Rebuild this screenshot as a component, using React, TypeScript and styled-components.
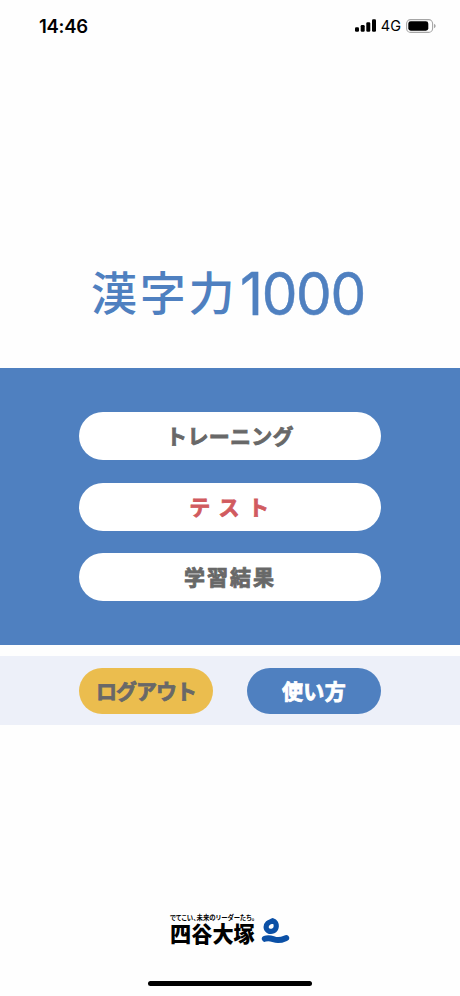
import styled, { createGlobalStyle } from "styled-components";

const GlobalStyle = createGlobalStyle`
  * {
    box-sizing: border-box;
  }

  body {
    margin: 0;
    background: #fefefe;
    font-family: "Noto Sans CJK JP", sans-serif;
  }
`;

const Screen = styled.div`
  display: flex;
  flex-direction: column;
  width: 460px;
  height: 996px;
  overflow: hidden;
`;

const StatusBar = styled.header`
  display: flex;
  justify-content: space-between;
  align-items: center;
  height: 52px;
  padding: 0 24px 0 39px;
  font-family: Inter, sans-serif;
  color: #000;
`;

const Clock = styled.span`
  font-size: 18.5px;
  font-weight: 600;
  line-height: 20px;
  letter-spacing: -0.3px;
`;

const StatusIcons = styled.div`
  display: flex;
  align-items: center;
  padding-bottom: 1px;
`;

const Network = styled.span`
  margin: 1px 5px 0 5px;
  font-size: 14.5px;
  font-weight: 400;
  line-height: 18px;
`;

const Title = styled.h1`
  display: flex;
  align-items: flex-start;
  height: 316px;
  margin: 0;
  padding: 195px 0 0 91px;
  color: #4f80c0;
  font-weight: 500;
`;

const TitleKanji = styled.span`
  width: 149px;
  font-size: 46px;
  line-height: 86px;
  letter-spacing: 2.8px;
`;

const TitleNumber = styled.span`
  font-family: Inter, sans-serif;
  font-size: 59px;
  font-weight: 400;
  line-height: 94px;
  letter-spacing: -1.4px;
  transform: scaleX(0.96);
  transform-origin: left center;
  -webkit-text-stroke: 0.5px #4f80c0;
`;

const Menu = styled.main`
  display: flex;
  flex-direction: column;
  align-items: center;
  gap: 22.5px;
  height: 277px;
  padding-top: 44px;
  background: #4f80c0;
`;

const Button = styled.button<{ $color?: string; $spacing?: number }>`
  display: flex;
  align-items: center;
  justify-content: center;
  width: 302px;
  height: 48px;
  padding: 0 0 2px;
  border: none;
  border-radius: 24px;
  background: #fff;
  color: ${(props) => props.$color || "#686868"};
  font-family: inherit;
  font-size: 21px;
  font-weight: 700;
  line-height: 30px;
  letter-spacing: ${(props) => props.$spacing || 0}px;
  white-space: pre;
  -webkit-text-stroke: 0.8px ${(props) => props.$color || "#686868"};
`;

const Footer = styled.nav`
  display: flex;
  justify-content: space-between;
  height: 69px;
  margin-top: 11px;
  padding: 12px 79px 0 79px;
  background: #edf0f9;
`;

const SmallButton = styled(Button)<{ $bg: string }>`
  width: 134px;
  height: 46px;
  background: ${(props) => props.$bg};
`;

const Brand = styled.div`
  display: flex;
  align-items: flex-end;
  margin: 188px 0 0 170px;
  color: #000;
`;

const BrandText = styled.div`
  display: flex;
  flex-direction: column;
  width: 91px;
`;

const Slogan = styled.span`
  height: 9px;
  font-size: 6.4px;
  font-weight: 700;
  line-height: 9px;
  letter-spacing: 0.05px;
  font-feature-settings: "palt";
  white-space: nowrap;
`;

const BrandName = styled.span`
  height: 22px;
  font-size: 21.2px;
  font-weight: 900;
  line-height: 22px;
  white-space: nowrap;
`;

const HomeBar = styled.div`
  width: 164px;
  height: 5px;
  margin: auto auto 10px;
  border-radius: 3px;
  background: #000;
`;

const Signal = () => (
  <svg width="21" height="13" viewBox="0 0 21 13">
    <rect x="0" y="8.3" width="4" height="4.5" rx="1.2" />
    <rect x="5.7" y="6" width="4" height="6.8" rx="1.2" />
    <rect x="11.3" y="3.3" width="4" height="9.5" rx="1.2" />
    <rect x="17" y="0.2" width="4" height="12.6" rx="1.2" />
  </svg>
);

const Battery = () => (
  <svg width="30" height="14" viewBox="0 0 30 14">
    <rect x="0.6" y="0.6" width="26" height="12.8" rx="4" fill="none" stroke="#a6a6a6" strokeWidth="1.1" />
    <rect x="2.3" y="2.3" width="20" height="9.4" rx="2.4" />
    <path d="M28 4.8q1.7.8 1.7 2.2T28 9.2z" fill="#a6a6a6" />
  </svg>
);

const BrandMark = () => (
  <svg width="29" height="26" viewBox="0 0 29 26" fill="none" stroke="#0b50a6" strokeLinecap="round">
    <path
      d="M11.8 2.7C10.4 3.7 8.6 3.7 6.9 5.2C4.4 7.6 4.6 11.1 7.2 12.7C10.4 14.6 14.8 12.7 15.2 8.8C15.5 6 14.3 3.2 11.8 2.7Z"
      strokeWidth="5.2"
      strokeLinejoin="round"
    />
    <path d="M3.8 20.8C9.5 18.7 12 21.9 17 22.1C21 22.2 23 20.9 25.2 20" strokeWidth="6" />
  </svg>
);

const menuItems = [
  { label: "トレーニング", spacing: 0.3 },
  { label: "テ ス ト", color: "#d15b5f", spacing: 1.8 },
  { label: "学習結果", spacing: 2 },
];

export default function App() {
  return (
    <>
      <GlobalStyle />
      <Screen>
        <StatusBar>
          <Clock>14:46</Clock>
          <StatusIcons>
            <Signal />
            <Network>4G</Network>
            <Battery />
          </StatusIcons>
        </StatusBar>
        <Title>
          <TitleKanji>漢字力</TitleKanji>
          <TitleNumber>1000</TitleNumber>
        </Title>
        <Menu>
          {menuItems.map((item) => (
            <Button key={item.label} $color={item.color} $spacing={item.spacing}>
              {item.label}
            </Button>
          ))}
        </Menu>
        <Footer>
          <SmallButton $bg="#ebbd4e" $spacing={-1}>ログアウト</SmallButton>
          <SmallButton $bg="#4f80c0" $color="#fff" $spacing={0.3}>使い方</SmallButton>
        </Footer>
        <Brand>
          <BrandText>
            <Slogan>でてこい、未来のリーダーたち。</Slogan>
            <BrandName>四谷大塚</BrandName>
          </BrandText>
          <BrandMark />
        </Brand>
        <HomeBar />
      </Screen>
    </>
  );
}
